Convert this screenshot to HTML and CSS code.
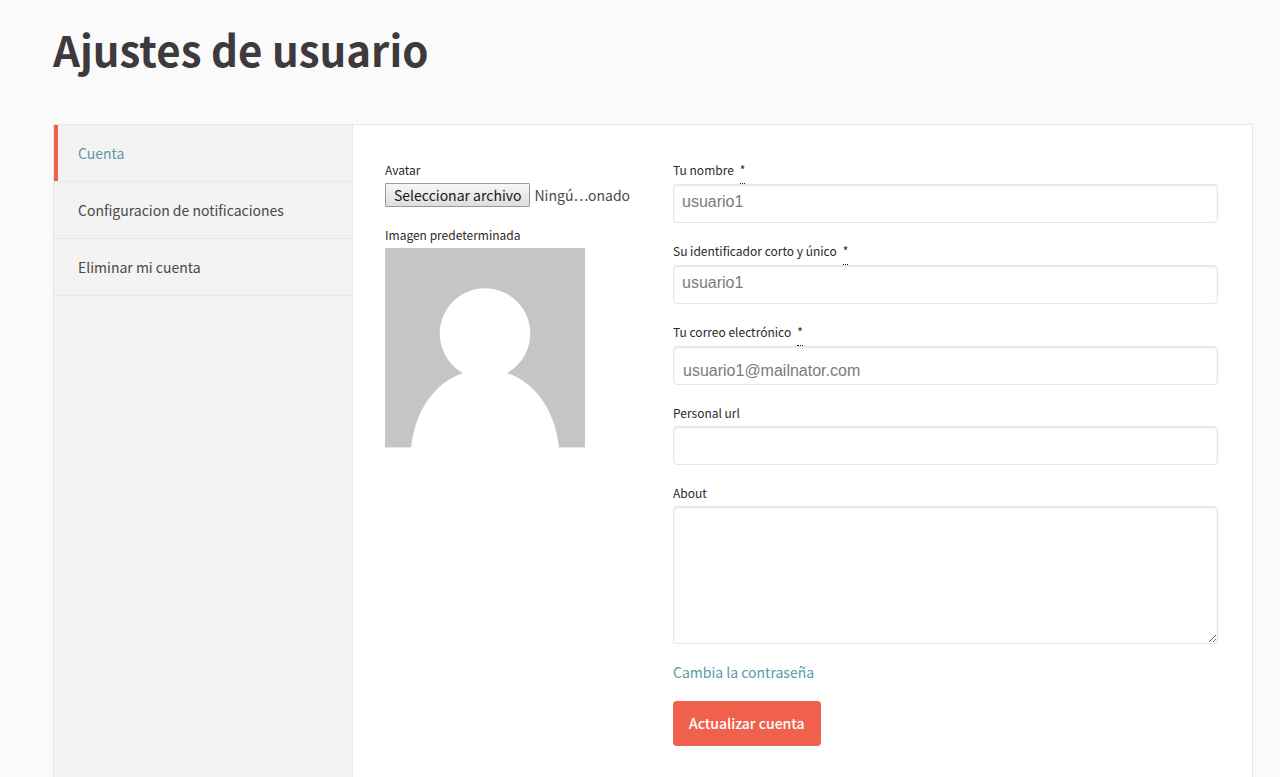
FILE: index.html
```html
<!DOCTYPE html>
<html lang="es">
<head>
<meta charset="utf-8">
<meta name="viewport" content="width=device-width, initial-scale=1">
<title>Ajustes de usuario</title>
<link rel="stylesheet" href="styles.css">
</head>
<body>
<main class="page">
  <h1 class="page-title">Ajustes de usuario</h1>
  <div class="panel">
    <nav class="side-nav">
      <a class="side-link active" href="#cuenta" aria-current="page">Cuenta</a>
      <a class="side-link" href="#notificaciones">Configuracion de notificaciones</a>
      <a class="side-link" href="#eliminar">Eliminar mi cuenta</a>
    </nav>
    <form class="account-form">
      <div class="avatar-column">
        <div class="upload">
          <label class="field-label" for="avatar">Avatar</label>
          <div class="file-picker">
            <input class="file-input" type="file" id="avatar">
            <label class="file-button" for="avatar">Seleccionar archivo</label>
            <span class="file-name">Ningú…onado</span>
          </div>
        </div>
        <figure class="preview">
          <figcaption class="field-label">Imagen predeterminada</figcaption>
          <svg class="avatar" viewBox="0 0 200 200" role="img" aria-label="Avatar predeterminado">
            <rect width="200" height="199.4" fill="#c5c5c5"/>
            <circle cx="100" cy="85.5" r="45.3" fill="#fff"/>
            <path d="M26 200C30 161 51 134 78 125H122C149 134 170 161 174 200Z" fill="#fff"/>
          </svg>
        </figure>
      </div>
      <div class="fields">
        <div class="field">
          <label class="field-label" for="name">Tu nombre <abbr class="required" title="Campo obligatorio">*</abbr></label>
          <input class="text-input" type="text" id="name" value="usuario1">
        </div>
        <div class="field">
          <label class="field-label" for="nickname">Su identificador corto y único <abbr class="required" title="Campo obligatorio">*</abbr></label>
          <input class="text-input" type="text" id="nickname" value="usuario1">
        </div>
        <div class="field">
          <label class="field-label" for="email">Tu correo electrónico <abbr class="required" title="Campo obligatorio">*</abbr></label>
          <input class="text-input email-input" type="email" id="email" value="usuario1@mailnator.com">
        </div>
        <div class="field">
          <label class="field-label" for="url">Personal url</label>
          <input class="text-input" type="url" id="url">
        </div>
        <div class="field">
          <label class="field-label" for="about">About</label>
          <textarea class="text-input about-input" id="about"></textarea>
        </div>
        <a class="password-link" href="#password">Cambia la contraseña</a>
        <button class="submit" type="submit">Actualizar cuenta</button>
      </div>
    </form>
  </div>
</main>
</body>
</html>
```

FILE: styles.css
```css
* {
  box-sizing: border-box;
}

body {
  margin: 0;
  background: #fafafa;
  color: #4b4749;
  font-family: "Noto Sans CJK SC", "Noto Sans", sans-serif;
  font-size: 14px;
  line-height: 24px;
}

.page {
  display: flex;
  flex-direction: column;
  min-height: 100vh;
  padding: 17px 27px 0 53px;
}

.page-title {
  margin: 0 0 43px;
  color: #3d393c;
  font-size: 42px;
  font-weight: 600;
  line-height: 64px;
}

.panel {
  display: grid;
  grid-template-columns: minmax(200px, 299px) minmax(0, 1fr);
  flex: 1;
  background: #fff;
  border: 1px solid #e8e8e8;
  border-bottom: 0;
}

.side-nav {
  background: #f3f3f3;
  border-right: 1px solid #e8e8e8;
}

.side-link {
  display: block;
  padding: 16px 24px;
  border-bottom: 1px solid #e8e8e8;
  color: #4b4749;
  text-decoration: none;
}

.side-link.active {
  background: linear-gradient(#ef604d, #ef604d) left / 4px 100% no-repeat padding-box;
  color: #599aa6;
}

.account-form {
  display: grid;
  grid-template-columns: minmax(0, 256px) minmax(0, 1fr);
  gap: 32px;
  padding: 33px 34px 31px 32px;
}

.field-label {
  display: flex;
  gap: 6px;
  padding-bottom: 1px;
  color: #2b2829;
  font-size: 12px;
  line-height: 24px;
}

.field-label:has(.required) {
  padding-bottom: 0;
}

.required {
  padding-bottom: 1px;
  border-bottom: 1px dotted #1b1819;
  text-decoration: none;
}

.upload {
  margin-bottom: 16px;
}

.file-picker {
  display: flex;
  gap: 4px;
  white-space: nowrap;
}

.file-input {
  position: absolute;
  width: 1px;
  height: 1px;
  opacity: 0;
}

.file-button {
  padding: 0 8px;
  border: 1px solid #999;
  border-radius: 1px;
  background: linear-gradient(#f6f6f6, #dedede);
  color: #1b1819;
  line-height: 22px;
}

.preview {
  margin: 0;
}

.avatar {
  display: block;
  width: 100%;
  max-width: 200px;
}

.field {
  margin-bottom: 16px;
}

.text-input {
  display: block;
  width: 100%;
  height: 39px;
  padding: 0 8px 4px;
  border: 1px solid #e6e6e6;
  border-radius: 4px;
  background: #fff;
  box-shadow: inset 0 1px 2px rgba(0, 0, 0, 0.1);
  color: #7b7b7b;
  font-family: "Liberation Sans", Arial, sans-serif;
  font-size: 16px;
}

.email-input {
  padding: 10px 9px 0;
}

.about-input {
  height: 138px;
  resize: vertical;
}

.password-link {
  display: block;
  width: fit-content;
  margin-bottom: 17px;
  color: #599aa6;
  text-decoration: none;
}

.submit {
  display: block;
  padding: 0 16px;
  border: 0;
  border-radius: 4px;
  background: #ef604d;
  color: #fff;
  font: inherit;
  font-weight: 500;
  line-height: 45px;
}
```
